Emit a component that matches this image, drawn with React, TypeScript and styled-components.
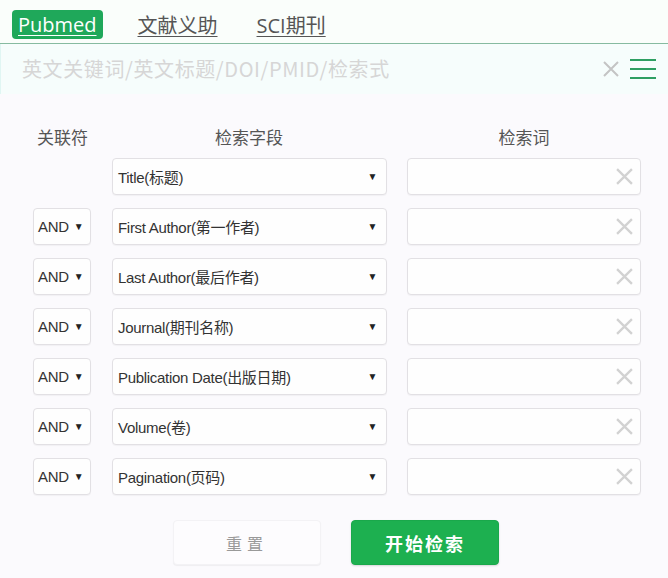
import React from "react";
import styled, { createGlobalStyle } from "styled-components";

const Global = createGlobalStyle`
  html, body { margin: 0; padding: 0; }
  body {
    background: #fbfafd;
    font-family: "Liberation Sans", Arial, "Noto Sans CJK SC", sans-serif;
    width: 668px;
    height: 578px;
    overflow: hidden;
  }
`;

const Page = styled.div`
  width: 668px;
  height: 578px;
  display: flex;
  flex-direction: column;
`;

const TabBar = styled.nav`
  height: 44px;
  box-sizing: border-box;
  background: #fafefb;
  border-bottom: 1px solid #86bba0;
  display: flex;
  align-items: flex-start;
  padding: 10px 0 0 12px;
  gap: 35px;
`;

const Tab = styled.a<{ $active?: boolean }>`
  height: 29px;
  box-sizing: border-box;
  display: flex;
  align-items: center;
  padding: 0 ${(p) => (p.$active ? "6px" : "0")};
  border-radius: 4px;
  font-family: "Open Sans", "Noto Sans CJK SC", sans-serif;
  font-size: 20px;
  text-decoration: underline;
  text-underline-offset: 3px;
  text-decoration-thickness: 1px;
  color: ${(p) => (p.$active ? "#ffffff" : "#555")};
  background: ${(p) => (p.$active ? "#1fa85a" : "transparent")};
  margin-right: ${(p) => (p.$active ? "0" : "4px")};
`;

const SearchBar = styled.div`
  height: 50px;
  background: #f6fdfc;
  border-left: 1px solid #e0f6f3;
  display: flex;
  align-items: center;
  padding: 0 12px 0 21px;
`;

const Placeholder = styled.div`
  flex: 1;
  font-family: "Noto Sans CJK SC", sans-serif;
  font-size: 20px;
  color: #d6d6d6;
  letter-spacing: 0.6px;
  padding-bottom: 2px;
`;

const IconBtn = styled.button<{ $gap?: number }>`
  border: 0;
  background: transparent;
  padding: 0;
  margin-right: ${(p) => p.$gap ?? 0}px;
  display: flex;
  align-items: center;
  justify-content: center;
`;

const Form = styled.div`
  display: grid;
  grid-template-columns: 58px 276px 234px;
  column-gap: 20px;
  row-gap: 13px;
  padding: 31px 0 0 33px;
  align-items: center;
`;

const HeadCell = styled.div<{ $left?: boolean }>`
  font-family: "Noto Sans CJK SC", sans-serif;
  font-size: 17px;
  color: #555;
  text-align: ${(p) => (p.$left ? "left" : "center")};
  padding-left: ${(p) => (p.$left ? "4px" : "0")};
  margin-bottom: -4px;
  line-height: 24px;
`;

const Box = styled.div`
  height: 37px;
  box-sizing: border-box;
  background: #fefefe;
  border: 1px solid #e2e0e4;
  border-radius: 4px;
  box-shadow: 0 1px 1px rgba(0, 0, 0, 0.04);
  display: flex;
  align-items: center;
  font-size: 15px;
  color: #333;
  letter-spacing: -0.3px;
`;

const Select = styled(Box)<{ $small?: boolean }>`
  padding: 0 ${(p) => (p.$small ? "6px" : "9px")} 0 ${(p) => (p.$small ? "4px" : "5px")};
  justify-content: ${(p) => (p.$small ? "flex-start" : "space-between")};
  gap: ${(p) => (p.$small ? "5px" : "0")};
  margin-left: ${(p) => (p.$small ? "0" : "1px")};
`;

const Caret = styled.span`
  font-size: 10px;
  color: #222;
`;

const Input = styled(Box)`
  justify-content: flex-end;
  padding-right: 7px;
`;

const Empty = styled.div``;

const Actions = styled.div`
  display: flex;
  justify-content: center;
  gap: 30px;
  padding: 25px 0 0 4px;
`;

const Button = styled.button<{ $primary?: boolean }>`
  width: 148px;
  height: 45px;
  border-radius: 4px;
  font-family: "Noto Sans CJK SC", sans-serif;
  font-size: ${(p) => (p.$primary ? "18px" : "16px")};
  font-weight: ${(p) => (p.$primary ? 700 : 400)};
  letter-spacing: ${(p) => (p.$primary ? "2px" : "5px")};
  color: ${(p) => (p.$primary ? "#ffffff" : "#999")};
  background: ${(p) => (p.$primary ? "#1db050" : "#fdfcfe")};
  border: ${(p) => (p.$primary ? "1px solid #1aa84b" : "1px solid #f3f2f5")};
  box-shadow: ${(p) => (p.$primary ? "0 1px 2px rgba(0,0,0,0.15)" : "0 1px 1px rgba(0,0,0,0.05)")};
`;

const Cross = ({ size, color, w }: { size: number; color: string; w: number }) => (
  <svg width={size} height={size} viewBox="0 0 16 16">
    <path d="M1 1L15 15M15 1L1 15" stroke={color} strokeWidth={w} strokeLinecap="butt" />
  </svg>
);

const Burger = () => (
  <svg width="26" height="22" viewBox="0 0 26 22">
    <rect x="0" y="1" width="26" height="2" fill="#2e9f62" />
    <rect x="0" y="10" width="26" height="2" fill="#2e9f62" />
    <rect x="0" y="19" width="26" height="2" fill="#2e9f62" />
  </svg>
);

const fields = [
  "Title(标题)",
  "First Author(第一作者)",
  "Last Author(最后作者)",
  "Journal(期刊名称)",
  "Publication Date(出版日期)",
  "Volume(卷)",
  "Pagination(页码)",
];

export default function App() {
  return (
    <Page>
      <Global />
      <TabBar>
        <Tab $active>Pubmed</Tab>
        <Tab>文献义助</Tab>
        <Tab>SCI期刊</Tab>
      </TabBar>
      <SearchBar>
        <Placeholder>英文关键词/英文标题/DOI/PMID/检索式</Placeholder>
        <IconBtn $gap={11}>
          <Cross size={16} color="#c4c4c4" w={2} />
        </IconBtn>
        <IconBtn>
          <Burger />
        </IconBtn>
      </SearchBar>
      <Form>
        <HeadCell $left>关联符</HeadCell>
        <HeadCell>检索字段</HeadCell>
        <HeadCell>检索词</HeadCell>
        {fields.map((f, i) => (
          <React.Fragment key={f}>
            {i === 0 ? (
              <Empty />
            ) : (
              <Select $small>
                AND <Caret>▼</Caret>
              </Select>
            )}
            <Select>
              {f}
              <Caret>▼</Caret>
            </Select>
            <Input>
              <Cross size={17} color="#d2d2d2" w={2.2} />
            </Input>
          </React.Fragment>
        ))}
      </Form>
      <Actions>
        <Button>重置</Button>
        <Button $primary>开始检索</Button>
      </Actions>
    </Page>
  );
}
